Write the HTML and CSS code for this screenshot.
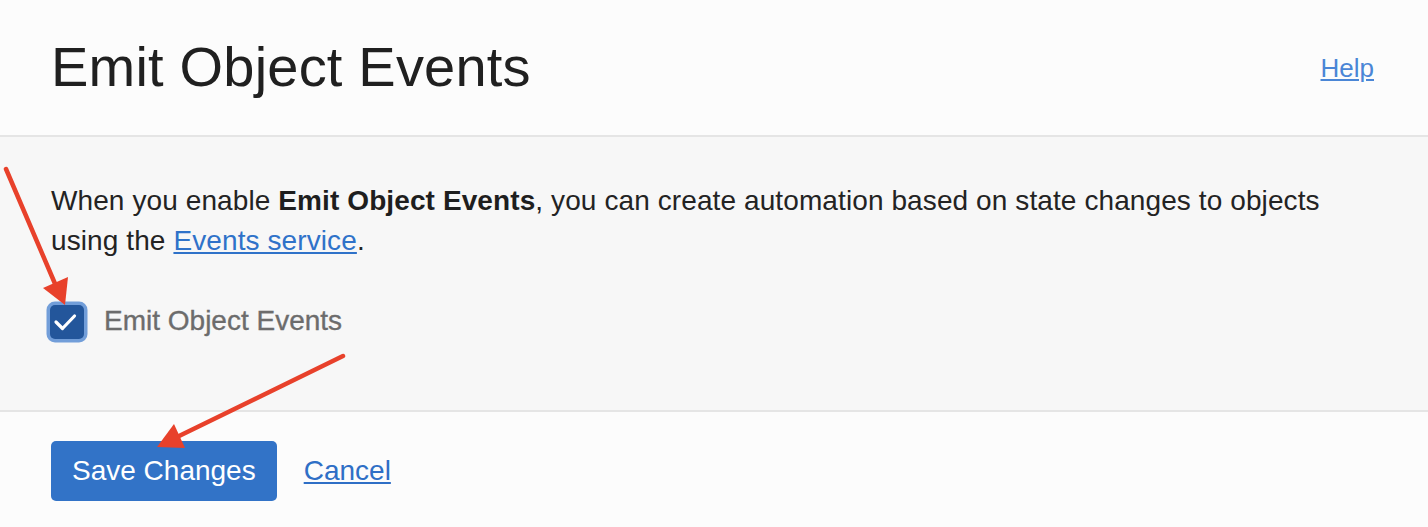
FILE: index.html
```html
<!DOCTYPE html>
<html lang="en">
<head>
<meta charset="utf-8">
<title>Emit Object Events</title>
<link rel="stylesheet" href="styles.css">
</head>
<body>
<div class="panel">
  <header class="panel-header">
    <h1 class="panel-title">Emit Object Events</h1>
    <a class="help-link" href="#">Help</a>
  </header>
  <section class="panel-body">
    <p class="intro">When you enable <strong>Emit Object Events</strong>, you can create automation based on state changes to objects using the <a class="text-link" href="#">Events service</a>.</p>
    <label class="check-row">
      <span class="checkbox">
        <svg class="check-icon" viewBox="0 0 34 34" width="34" height="34" aria-hidden="true">
          <path d="M6 17 L12.5 23.5 L24.5 11" fill="none" stroke="#ffffff" stroke-width="3.2" stroke-linecap="round" stroke-linejoin="round"/>
        </svg>
      </span>
      <span class="check-label">Emit Object Events</span>
    </label>
  </section>
  <footer class="panel-footer">
    <button class="btn-primary" type="button">Save Changes</button>
    <a class="cancel-link" href="#">Cancel</a>
  </footer>
</div>
<svg class="annotations" width="1428" height="527" viewBox="0 0 1428 527" aria-hidden="true">
  <line x1="6" y1="169" x2="56" y2="286" stroke="#e8412b" stroke-width="4.5" stroke-linecap="round"/>
  <polygon points="65,305 43,288 68,277" fill="#e8412b"/>
  <line x1="343" y1="356" x2="177" y2="437" stroke="#e8412b" stroke-width="4.5" stroke-linecap="round"/>
  <polygon points="157,447 185,448 174,424" fill="#e8412b"/>
</svg>
</body>
</html>
```
FILE: styles.css
```css
* { box-sizing: border-box; }

html, body {
  margin: 0;
  padding: 0;
  background: #fcfcfc;
}

body {
  font-family: "Liberation Sans", Arial, Helvetica, sans-serif;
  color: #232323;
  width: 1428px;
  height: 527px;
  overflow: hidden;
}

.panel {
  display: flex;
  flex-direction: column;
}

.panel-header {
  height: 137px;
  padding: 35px 54px 0 51px;
  display: flex;
  justify-content: space-between;
  align-items: flex-start;
  background: #fcfcfc;
  border-bottom: 2px solid #e5e5e5;
}

.panel-title {
  margin: 0;
  font-size: 56px;
  line-height: 64px;
  font-weight: 400;
  color: #202020;
  letter-spacing: 0.2px;
}

.help-link {
  margin-top: 18px;
  font-size: 26px;
  line-height: 30px;
  color: #4a86d6;
  text-decoration: underline;
}

.panel-body {
  height: 275px;
  padding: 44px 51px 0 51px;
  background: #f7f7f7;
  border-bottom: 2px solid #e5e5e5;
}

.intro {
  margin: 0;
  font-size: 28px;
  line-height: 40px;
  color: #232323;
  letter-spacing: 0.1px;
}

.intro strong {
  font-weight: 700;
  color: #1e1e1e;
}

.text-link {
  color: #2f72c9;
  text-decoration: underline;
}

.check-row {
  margin-top: 44px;
  display: flex;
  align-items: flex-start;
  gap: 20px;
}

.checkbox {
  width: 34px;
  height: 34px;
  margin-left: -1px;
  border-radius: 5px;
  background: #23569b;
  box-shadow: 0 0 0 3.5px #729ed9;
  display: flex;
  align-items: center;
  justify-content: center;
  flex: none;
}

.check-icon {
  display: block;
}

.check-label {
  margin-top: -4px;
  font-size: 28px;
  line-height: 40px;
  color: #6c6c6c;
  -webkit-text-stroke: 0.35px #6c6c6c;
}

.panel-footer {
  flex: 1;
  height: 113px;
  padding: 29px 51px 0 51px;
  display: flex;
  align-items: flex-start;
  gap: 27px;
  background: #fcfcfc;
}

.btn-primary {
  height: 60px;
  padding: 0 21px;
  border: none;
  border-radius: 5px;
  background: #3273c7;
  color: #ffffff;
  font-family: "Liberation Sans", Arial, Helvetica, sans-serif;
  font-size: 28px;
  line-height: 60px;
}

.cancel-link {
  font-size: 28px;
  line-height: 60px;
  color: #2f6fc6;
  text-decoration: underline;
}

.annotations {
  position: absolute;
  left: 0;
  top: 0;
  pointer-events: none;
}
```
